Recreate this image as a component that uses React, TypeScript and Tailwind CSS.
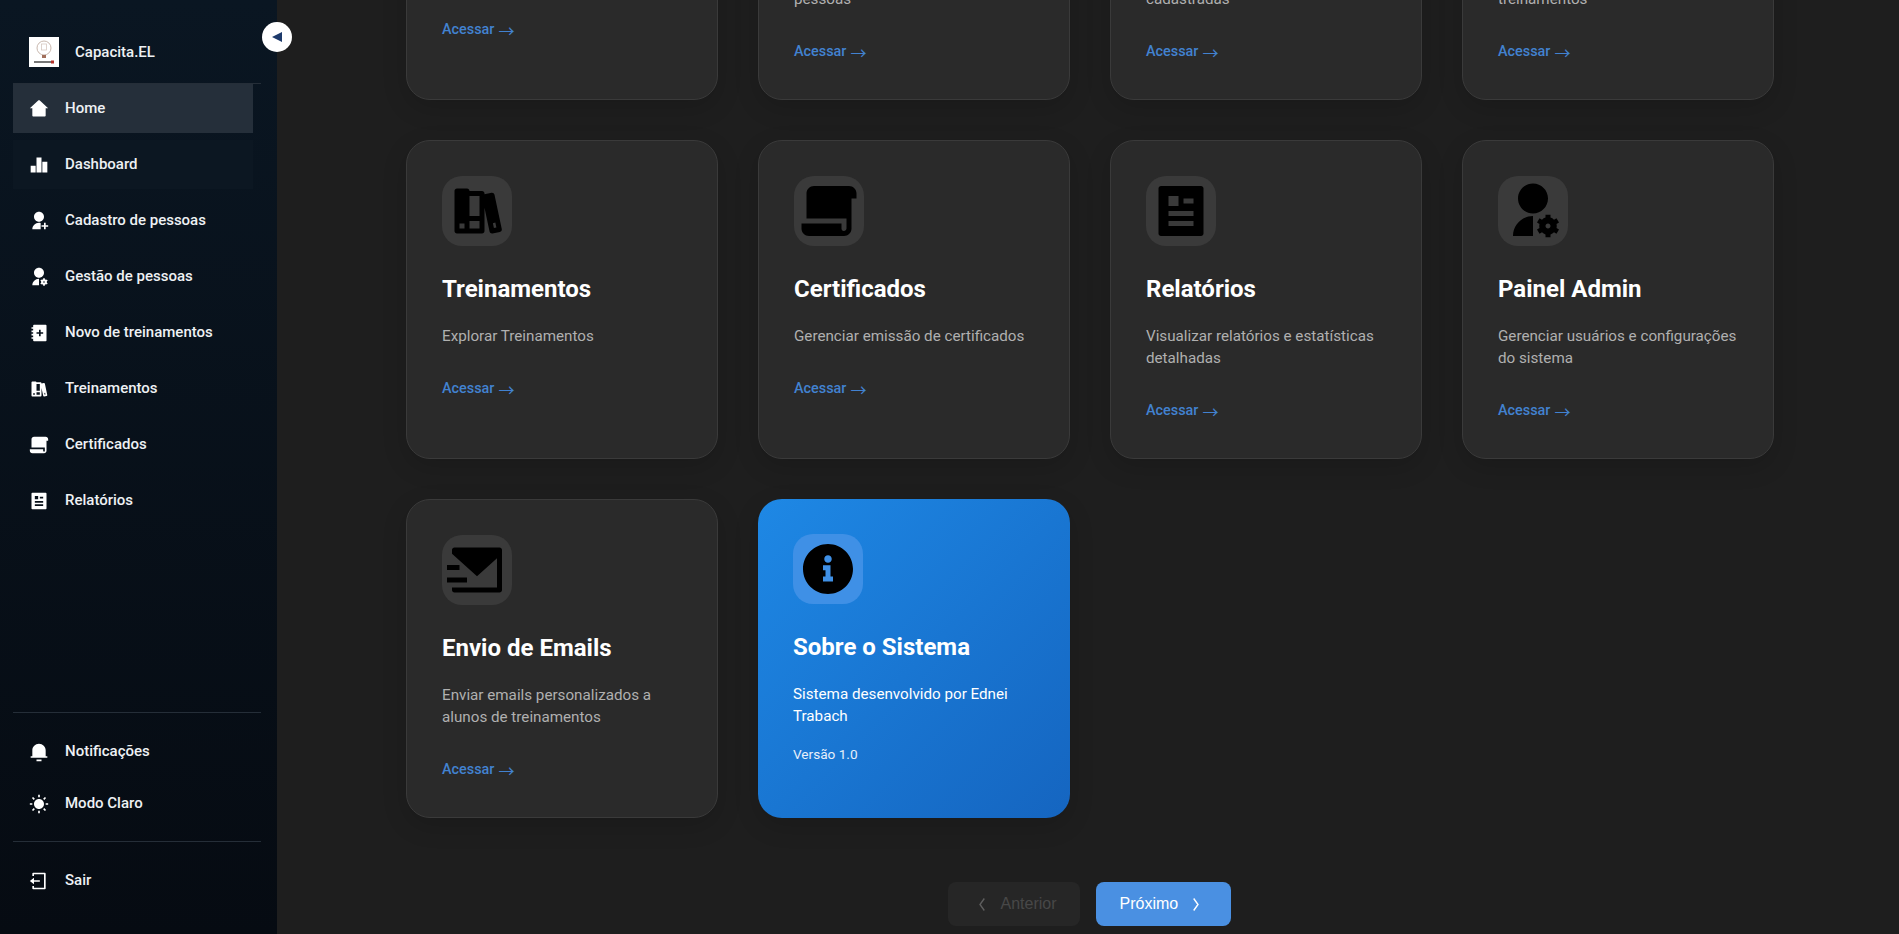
import React from "react";
import { RiHome2Fill, RiBarChart2Fill, RiUserAddFill, RiUserSettingsFill, RiHealthBookFill, RiBookShelfFill, RiFilePaper2Fill, RiArticleFill, RiMailSendFill, RiNotification3Fill, RiSunFill, RiLogoutBoxLine, RiInformation2Fill } from "react-icons/ri";

function Logo() {
  return (
    <div className="w-[30px] h-[30px] bg-white flex items-center justify-center">
      <svg width="30" height="30" viewBox="0 0 30 30">
        <circle cx="15" cy="11" r="7" fill="none" stroke="#c9b8ae" strokeWidth="1" />
        <rect x="12.500" y="7" width="5" height="6" fill="none" stroke="#d6c8c0" strokeWidth="0.800" />
        <rect x="13" y="18" width="4" height="3" fill="#a2705c" />
        <rect x="5" y="24" width="17" height="2" fill="#777" />
        <rect x="22" y="23.500" width="3" height="3" fill="#b5332a" />
      </svg>
    </div>
  );
}

function NavItem({ icon, label, active, faint }: { icon: React.ReactNode; label: string; active?: boolean; faint?: boolean }) {
  return (
    <div className={`flex items-center h-[49px] w-[240px] pl-[16px] gap-[16px] text-[15px] font-medium text-[#eef1f4] ${active ? "bg-[#252f3a]" : faint ? "bg-[#0c1722]" : ""}`}>
      <span className="w-[20px] flex justify-center text-white">{icon}</span>
      <span>{label}</span>
    </div>
  );
}

function Acessar() {
  return (
    <div className="mt-[31px] flex items-center gap-[4px] text-[14.400px] leading-[22px] font-medium text-[#4282d0]">
      <span>Acessar</span>
      <span className="font-['Noto_Sans_CJK_JP',sans-serif] text-[16px] font-normal leading-[22px]">→</span>
    </div>
  );
}

function Card({ icon, title, desc }: { icon?: React.ReactNode; title: string; desc: React.ReactNode }) {
  return (
    <div className="h-[319px] rounded-[24px] border border-[#3a3a3a] bg-[#2a2a2a] p-[35px] shadow-[0_8px_24px_rgba(0,0,0,0.15)]">
      <div className="w-[70px] h-[70px] rounded-[20px] bg-[#3a3a3a] flex items-center justify-center text-black">{icon}</div>
      <h3 className="mt-[29px] text-[24px] leading-[28px] font-bold text-white">{title}</h3>
      <p className="mt-[22px] text-[15.200px] leading-[22px] text-[#b0b0b0]">{desc}</p>
      <Acessar />
    </div>
  );
}

export default function App() {
  return (
    <div className="flex h-screen overflow-hidden bg-[#1e1e1e] font-['Roboto',sans-serif]">
      <aside className="relative w-[277px] shrink-0 h-full bg-gradient-to-b from-[#0a1622] to-[#060b12] pl-[13px] pr-[16px] flex flex-col">
        <div className="h-[84px] shrink-0 border-b border-[#252e38] flex items-center pl-[16px] pt-[21px] gap-[16px]">
          <Logo />
          <span className="text-[15px] font-medium text-[#eef1f4]">Capacita.EL</span>
        </div>
        <div className="absolute left-[262px] top-[22px] w-[30px] h-[30px] rounded-full bg-white flex items-center justify-center">
          <svg width="12" height="12" viewBox="0 0 12 12"><path d="M1 6 11 1v10z" fill="#1d3a6b" /></svg>
        </div>
        <nav className="flex flex-col gap-[7px]">
          <NavItem active icon={<RiHome2Fill size={20} />} label="Home" />
          <NavItem faint icon={<RiBarChart2Fill size={20} />} label="Dashboard" />
          <NavItem icon={<RiUserAddFill size={20} />} label="Cadastro de pessoas" />
          <NavItem icon={<RiUserSettingsFill size={20} />} label="Gestão de pessoas" />
          <NavItem icon={<RiHealthBookFill size={20} />} label="Novo de treinamentos" />
          <NavItem icon={<RiBookShelfFill size={20} />} label="Treinamentos" />
          <NavItem icon={<RiFilePaper2Fill size={20} />} label="Certificados" />
          <NavItem icon={<RiArticleFill size={20} />} label="Relatórios" />
        </nav>
        <div className="flex-1" />
        <div className="border-t border-[#252e38] pt-[14px] pb-[13px] flex flex-col gap-[3px]">
          <NavItem icon={<RiNotification3Fill size={20} />} label="Notificações" />
          <NavItem icon={<RiSunFill size={20} />} label="Modo Claro" />
        </div>
        <div className="border-t border-[#252e38] pt-[14px] pb-[29px]">
          <NavItem icon={<RiLogoutBoxLine size={20} />} label="Sair" />
        </div>
      </aside>
      <main className="flex-1 h-full overflow-hidden pl-[129px]">
        <div className="w-[1368px] -mt-[219px]">
          <div className="grid grid-cols-4 gap-x-[40px] gap-y-[40px]">
            <Card icon={<RiBarChart2Fill size={60} />} title="Dashboard" desc="Visualizar indicadores" />
            <Card icon={<RiUserAddFill size={60} />} title="Cadastro de pessoas" desc={<>Cadastrar e gerenciar novas<br />pessoas</>} />
            <Card icon={<RiUserSettingsFill size={60} />} title="Gestão de pessoas" desc={<>Gerenciar pessoas<br />cadastradas</>} />
            <Card icon={<RiHealthBookFill size={60} />} title="Novo treinamento" desc={<>Criar e cadastrar novos<br />treinamentos</>} />
            <Card icon={<RiBookShelfFill size={60} />} title="Treinamentos" desc="Explorar Treinamentos" />
            <Card icon={<RiFilePaper2Fill size={60} />} title="Certificados" desc="Gerenciar emissão de certificados" />
            <Card icon={<RiArticleFill size={60} />} title="Relatórios" desc={<>Visualizar relatórios e estatísticas<br />detalhadas</>} />
            <Card icon={<RiUserSettingsFill size={60} />} title="Painel Admin" desc={<>Gerenciar usuários e configurações<br />do sistema</>} />
            <Card icon={<RiMailSendFill size={60} />} title="Envio de Emails" desc={<>Enviar emails personalizados a<br />alunos de treinamentos</>} />
            <div className="h-[319px] rounded-[24px] bg-gradient-to-br from-[#1e88e5] to-[#1565c0] p-[35px] shadow-[0_8px_24px_rgba(0,0,0,0.15)]">
              <div className="w-[70px] h-[70px] rounded-[20px] bg-[#3f90e6] flex items-center justify-center text-black"><RiInformation2Fill size={60} /></div>
              <h3 className="mt-[29px] text-[24px] leading-[28px] font-bold text-white">Sobre o Sistema</h3>
              <p className="mt-[22px] text-[15.200px] leading-[22px] text-white">Sistema desenvolvido por Ednei<br />Trabach</p>
              <p className="mt-[16px] text-[13.600px] leading-[22px] text-[#e6effa]">Versão 1.0</p>
            </div>
          </div>
          <div className="mt-[64px] pr-[2px] flex justify-center gap-[16px] font-['Liberation_Sans',sans-serif] text-[16px]">
            <div className="w-[132px] h-[44px] rounded-[8px] bg-[#262626] flex items-center pl-[31px] gap-[16px] text-[#484848]">
              <svg width="6" height="13" viewBox="0 0 6 13" fill="none" stroke="#5e5e5e" strokeWidth="1.400"><path d="M5.300.5 1 6.500l4.300 6" /></svg>
              <span>Anterior</span>
            </div>
            <div className="w-[135px] h-[44px] rounded-[8px] bg-[#4a90e2] flex items-center pl-[24px] gap-[15px] text-white">
              <span>Próximo</span>
              <svg width="6" height="13" viewBox="0 0 6 13" fill="none" stroke="#fff" strokeWidth="1.400"><path d="M.7.5 5 6.500l-4.300 6" /></svg>
            </div>
          </div>
        </div>
      </main>
    </div>
  );
}
